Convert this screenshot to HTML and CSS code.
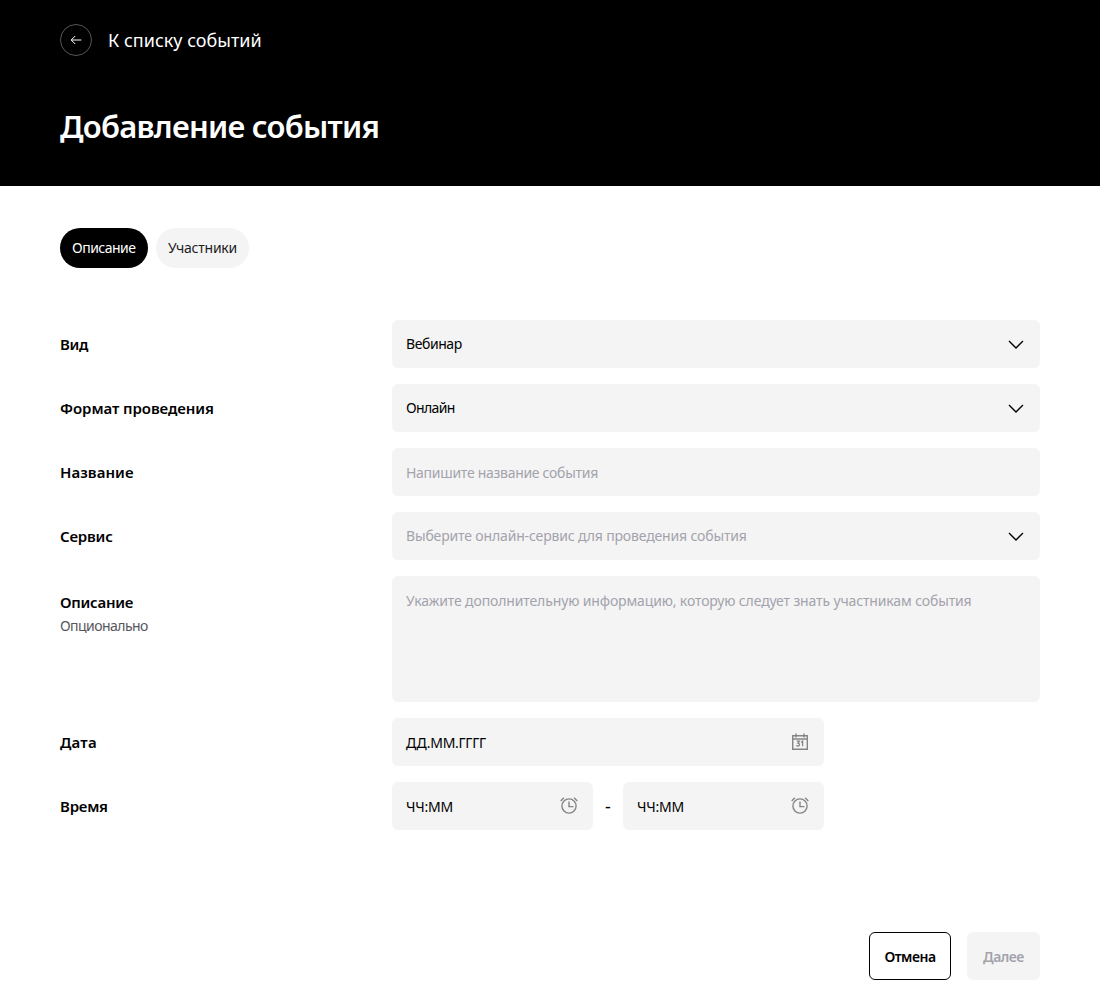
FILE: index.html
```html
<!DOCTYPE html>
<html lang="ru">
<head>
<meta charset="utf-8">
<title>Добавление события</title>
<link rel="stylesheet" href="styles.css">
</head>
<body>
<header class="header">
  <a class="back">
    <span class="back-circle"><svg width="12" height="10" viewBox="0 0 12 10"><path d="M11.3 5H1.3M5.2 1 1.2 5l4 4"/></svg></span>
    <span class="back-text">К списку событий</span>
  </a>
  <h1 class="title"><span>Добавление события</span></h1>
</header>
<main class="main">
  <nav class="tabs">
    <span class="tab tab-active">Описание</span>
    <span class="tab tab-members">Участники</span>
  </nav>
  <form class="form">
    <div class="row">
      <div class="label"><span class="l-kind">Вид</span></div>
      <div class="field"><span class="t-kind">Вебинар</span><svg class="chevron" width="16" height="9" viewBox="0 0 16 9"><path d="m1 1 7 7 7-7"/></svg></div>
    </div>
    <div class="row">
      <div class="label"><span class="l-format">Формат проведения</span></div>
      <div class="field"><span class="t-format">Онлайн</span><svg class="chevron" width="16" height="9" viewBox="0 0 16 9"><path d="m1 1 7 7 7-7"/></svg></div>
    </div>
    <div class="row">
      <div class="label"><span class="l-name">Название</span></div>
      <div class="field hint low"><span class="t-name">Напишите название события</span></div>
    </div>
    <div class="row">
      <div class="label"><span class="l-service">Сервис</span></div>
      <div class="field hint"><span class="t-service">Выберите онлайн-сервис для проведения события</span><svg class="chevron" width="16" height="9" viewBox="0 0 16 9"><path d="m1 1 7 7 7-7"/></svg></div>
    </div>
    <div class="row row-area">
      <div class="label label-area"><span class="l-desc">Описание</span><small class="optional">Опционально</small></div>
      <div class="field area hint"><span class="t-desc">Укажите дополнительную информацию, которую следует знать участникам события</span></div>
    </div>
    <div class="row">
      <div class="label"><span class="l-date">Дата</span></div>
      <div class="field date low"><span class="t-date">ДД.ММ.ГГГГ</span><svg class="icon" width="20" height="20" viewBox="0 0 20 20"><path d="M2.7 3.7h14.6v13.6H2.7zM2.7 7h14.6M6 1.5v4M14 1.5v4"/><path class="digits" d="M6.7 9.2h2.6L8 11.1c2.1 0 1.9 3-.1 3-.8 0-1.2-.4-1.4-.9M11.1 10.4l1.5-1.2v5.1"/></svg></div>
    </div>
    <div class="row">
      <div class="label"><span class="l-time">Время</span></div>
      <div class="times">
        <div class="field low"><span class="t-time">ЧЧ:ММ</span><svg class="icon" width="20" height="20" viewBox="0 0 20 20"><circle cx="10" cy="10" r="7.1"/><path d="M10 5.5v5.1h4.5M1.7 5l3.2-3.2M18.3 5l-3.2-3.2"/></svg></div>
        <span class="dash">-</span>
        <div class="field low"><span class="t-time">ЧЧ:ММ</span><svg class="icon" width="20" height="20" viewBox="0 0 20 20"><circle cx="10" cy="10" r="7.1"/><path d="M10 5.5v5.1h4.5M1.7 5l3.2-3.2M18.3 5l-3.2-3.2"/></svg></div>
      </div>
    </div>
  </form>
  <div class="actions">
    <button class="btn cancel" type="button">Отмена</button>
    <button class="btn next" type="button" disabled>Далее</button>
  </div>
</main>
</body>
</html>
```

FILE: styles.css
```css
* { box-sizing: border-box; }
body { margin: 0; background: #fff; color: #000; font: 14px/24px "Noto Sans", "Open Sans", sans-serif; }
span { white-space: nowrap; }
svg { display: block; flex: none; fill: none; }
.header { height: 186px; padding: 24px 60px 0; background: #000; color: #fff; }
.back { display: flex; align-items: center; gap: 16px; height: 32px; }
.back-circle { display: flex; align-items: center; justify-content: center; width: 32px; height: 32px; border: 1px solid #56565c; border-radius: 50%; }
.back-circle svg { stroke: #fff; stroke-width: 1; }
.back-text { font-size: 18px; }
.title { margin: 50px 0 0; font-size: 31px; line-height: 40px; font-weight: 600; letter-spacing: -.76px; }
.main { padding: 42px 60px 0; }
.tabs { display: flex; gap: 8px; }
.tab { height: 40px; width: 93px; padding-left: 12px; border-radius: 20px; background: #f4f4f4; color: #1d1d1f; line-height: 40px; letter-spacing: -.25px; }
.tab-active { width: 88px; background: #000; color: #fff; letter-spacing: -.5px; }
.form { display: flex; flex-direction: column; gap: 16px; margin-top: 52px; }
.row { display: grid; grid-template-columns: 332px 1fr; height: 48px; }
.row-area { height: 126px; }
.label { display: flex; align-items: center; font-size: 15px; font-weight: 600; }
.label-area { flex-direction: column; align-items: flex-start; padding-top: 14px; }
.optional { font-size: 14px; font-weight: 400; color: #56565c; letter-spacing: -.55px; }
.l-kind { letter-spacing: -.3px; }
.l-format { letter-spacing: -.07px; }
.l-name { letter-spacing: .05px; }
.l-service { letter-spacing: -.2px; }
.l-desc { letter-spacing: -.27px; }
.l-date { letter-spacing: .2px; }
.l-time { letter-spacing: -.22px; }
.field { display: flex; align-items: center; justify-content: space-between; height: 48px; padding: 0 16px 0 14px; border-radius: 6px; background: #f4f4f4; }
.field.low > span { padding-top: 2px; }
.t-kind { letter-spacing: -.43px; }
.t-format { letter-spacing: -.65px; }
.t-name { letter-spacing: -.29px; }
.t-service { letter-spacing: -.155px; }
.t-desc { letter-spacing: -.135px; }
.t-date { letter-spacing: -.3px; }
.t-time { letter-spacing: -.2px; }
.hint { color: #a3a3ac; }
.area { height: 126px; align-items: flex-start; padding-top: 13px; }
.chevron { stroke: #000; stroke-width: 1.4; }
.icon { stroke: #858585; stroke-width: 1.4; }
.digits { stroke-width: 1.3; }
.date { width: 432px; padding-right: 14px; }
.times { display: grid; grid-template-columns: 201px 30px 201px; align-items: center; }
.times .field { padding-right: 14px; }
.dash { text-align: center; font-size: 18px; }
.actions { display: flex; justify-content: flex-end; gap: 16px; margin-top: 102px; }
.btn { height: 48px; padding: 0; border: 0; border-radius: 6px; font: 600 14px/48px "Noto Sans", "Open Sans", sans-serif; letter-spacing: -.5px; }
.cancel { width: 82px; border: 1px solid #000; background: #fff; color: #000; }
.next { width: 73px; padding-top: 1px; background: #f4f4f4; color: #a3a3ac; }
```
